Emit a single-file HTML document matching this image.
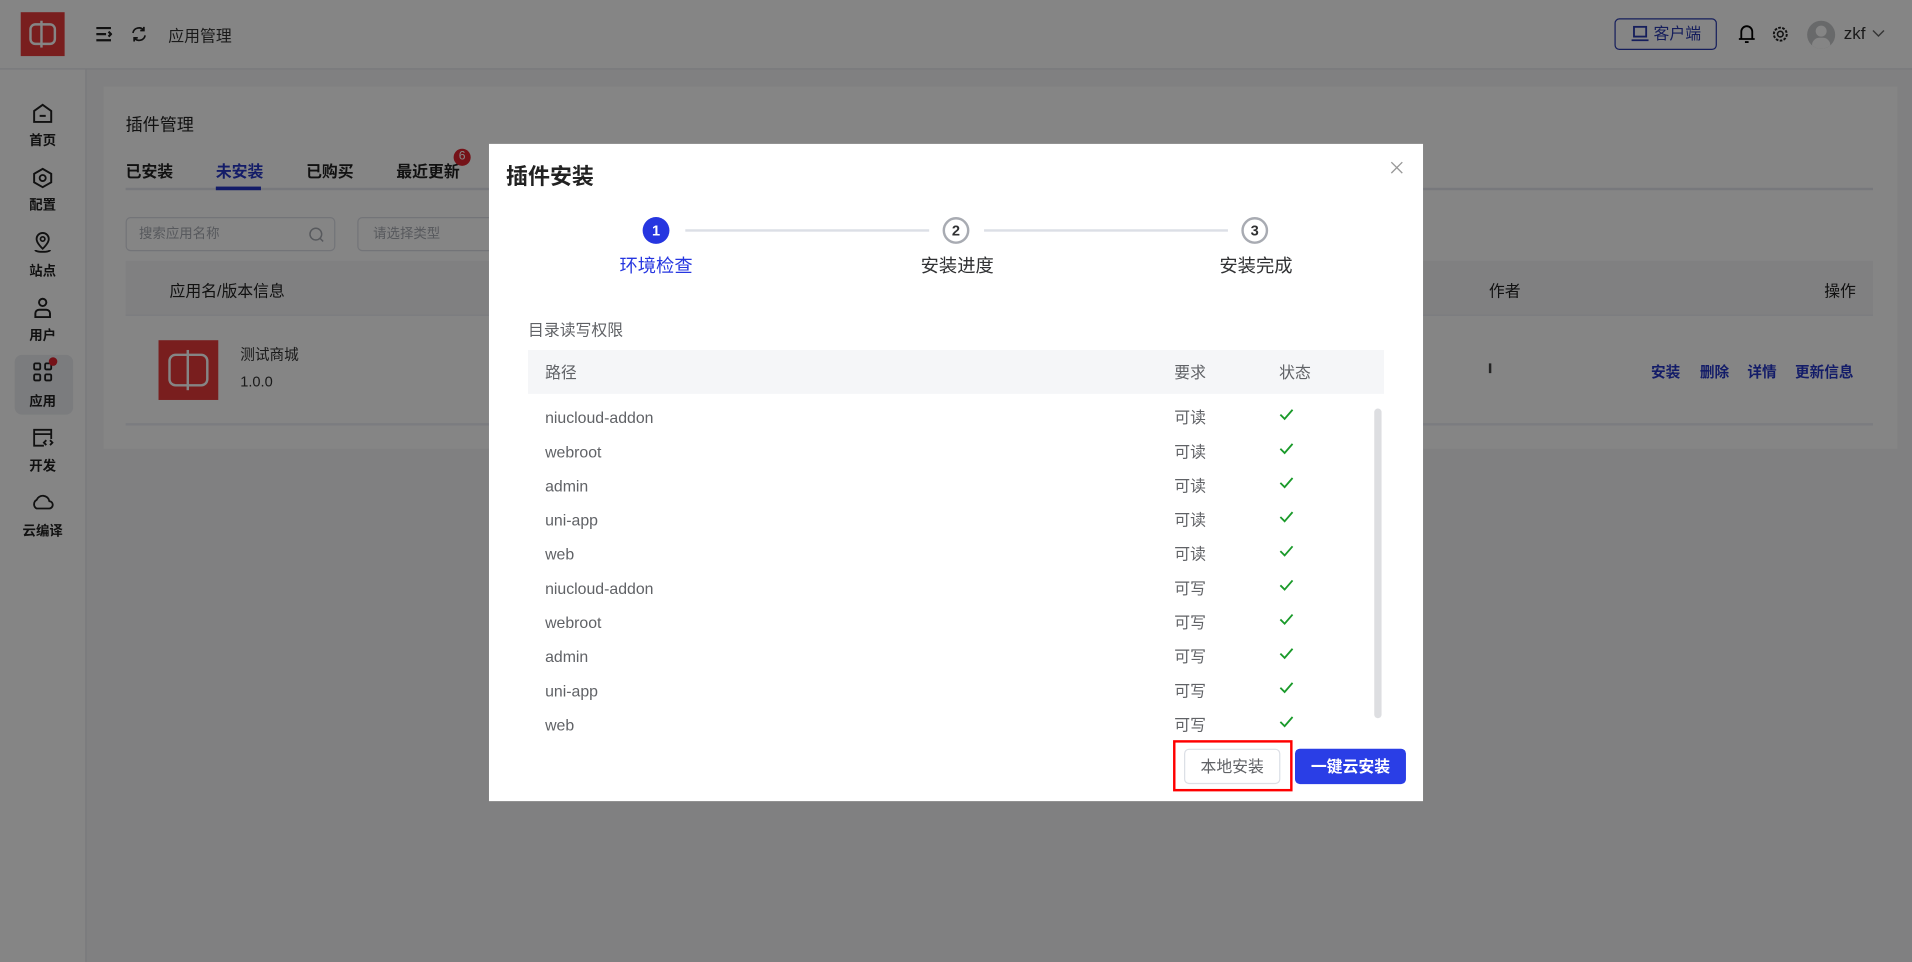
<!DOCTYPE html>
<html><head><meta charset="utf-8">
<style>
*{box-sizing:border-box;margin:0;padding:0}
html,body{width:1912px;height:962px;overflow:hidden;background:#fff}
body{font-family:"Liberation Sans","Noto Sans CJK SC",sans-serif;color:#303133}
#w{position:absolute;left:0;top:0;width:1568px;height:789px;transform:scale(1.21939);transform-origin:0 0;background:#f5f6f8}
.a{position:absolute;white-space:nowrap}
.hdr{position:absolute;left:0;top:0;width:1568px;height:57px;background:#fff;border-bottom:1px solid #e4e6eb}
.side{position:absolute;left:0;top:57px;width:71px;height:732px;background:#fff;border-right:1px solid #e4e6eb}
.si{position:absolute;left:0;width:70px;text-align:center;font-size:11px;font-weight:bold;color:#222}
.card{position:absolute;left:85px;top:71px;width:1471px;height:297px;background:#fff}
.ov{position:absolute;left:0;top:0;width:1568px;height:789px;background:rgba(0,0,0,0.48)}
.dlg{position:absolute;left:401px;top:118px;width:766px;height:539px;background:#fff}
.row{position:absolute;left:46px;font-size:13px;color:#606266;line-height:16px;white-space:nowrap}
</style></head><body><div id="w">
<div class="hdr">
 <div class="a" style="left:17px;top:10px;width:36px;height:36px;background:#e83b3b"></div>
 <div class="a" style="left:24px;top:19px;width:22px;height:18px;border:2px solid #fff;border-radius:5px"></div>
 <div class="a" style="left:33px;top:17px;width:2px;height:22px;background:#fff"></div>
 <svg class="a" style="left:78px;top:21px" width="14" height="14" viewBox="0 0 14 14"><path d="M1 2h12M1 7h8M1 12h12M11 5l2 2-2 2" stroke="#222" stroke-width="1.8" fill="none"/></svg>
 <svg class="a" style="left:107px;top:21px" width="14" height="14" viewBox="0 0 14 14"><path d="M2 6a5 5 0 0 1 9-2M12 8a5 5 0 0 1-9 2M11 1v3H8M3 13v-3h3" stroke="#222" stroke-width="1.4" fill="none"/></svg>
 <div class="a" style="left:138px;top:19px;font-size:13px;color:#333">应用管理</div>
 <div class="a" style="left:1324px;top:15px;width:84px;height:26px;border:1px solid #2a3ab0;border-radius:4px;color:#2a3ab0;font-size:13px;line-height:16px;padding:4px 0 0 31px">客户端</div>
 <svg class="a" style="left:1338px;top:21px" width="14" height="13" viewBox="0 0 14 13"><rect x="2" y="1" width="10" height="8" stroke="#2a3ab0" stroke-width="1.5" fill="none"/><path d="M0 12h14" stroke="#2a3ab0" stroke-width="1.5"/></svg>
 <svg class="a" style="left:1425px;top:19px" width="15" height="17" viewBox="0 0 15 17"><path d="M3 13V7a4.5 4.5 0 0 1 9 0v6M1 13h13M6 15.5h3" stroke="#000" stroke-width="1.5" fill="none"/></svg>
 <svg class="a" style="left:1453px;top:21px" width="14" height="14" viewBox="0 0 14 14"><circle cx="7" cy="7" r="2.3" stroke="#222" stroke-width="1.3" fill="none"/><circle cx="7" cy="7" r="5.3" stroke="#222" stroke-width="1.6" stroke-dasharray="2.2 1.1" fill="none"/></svg>
 <div class="a" style="left:1482px;top:17px;width:23px;height:23px;border-radius:50%;background:#c8c9cc;overflow:hidden"><div class="a" style="left:7px;top:4px;width:9px;height:9px;border-radius:50%;background:#fff"></div><div class="a" style="left:4px;top:14px;width:15px;height:10px;border-radius:6px 6px 0 0;background:#fff"></div></div>
 <div class="a" style="left:1512px;top:19px;font-size:14px;color:#333">zkf</div>
 <svg class="a" style="left:1535px;top:24px" width="11" height="7" viewBox="0 0 11 7"><path d="M1 1l4.5 4.5L10 1" stroke="#666" stroke-width="1.2" fill="none"/></svg>
</div>
<div class="side">
 <svg class="a" style="left:26px;top:27px" width="18" height="18" viewBox="0 0 18 18"><path d="M2 7l7-5 7 5v9H2z M6.5 11h5" stroke="#222" stroke-width="1.6" fill="none"/></svg>
 <div class="si" style="top:50px">首页</div>
 <svg class="a" style="left:26px;top:80px" width="18" height="18" viewBox="0 0 18 18"><path d="M9 1.5l7 4v7l-7 4-7-4v-7z" stroke="#222" stroke-width="1.6" fill="none"/><circle cx="9" cy="9" r="2.5" stroke="#222" stroke-width="1.5" fill="none"/></svg>
 <div class="si" style="top:103px">配置</div>
 <svg class="a" style="left:26px;top:133px" width="18" height="19" viewBox="0 0 18 19"><path d="M9 14s-5-4.5-5-8a5 5 0 0 1 10 0c0 3.5-5 8-5 8zM3 15c0 2 12 2 12 0" stroke="#222" stroke-width="1.5" fill="none"/><circle cx="9" cy="6" r="1.8" stroke="#222" stroke-width="1.4" fill="none"/></svg>
 <div class="si" style="top:157px">站点</div>
 <svg class="a" style="left:26px;top:186px" width="18" height="18" viewBox="0 0 18 18"><circle cx="9" cy="5" r="3" stroke="#222" stroke-width="1.6" fill="none"/><path d="M3 17v-3a3 3 0 0 1 3-3h6a3 3 0 0 1 3 3v3z" stroke="#222" stroke-width="1.6" fill="none"/></svg>
 <div class="si" style="top:210px">用户</div>
 <div class="a" style="left:12px;top:234px;width:48px;height:49px;background:#eceef2;border-radius:6px"></div>
 <svg class="a" style="left:27px;top:240px" width="16" height="16" viewBox="0 0 16 16"><rect x="1" y="1" width="5" height="5" rx="1" stroke="#222" stroke-width="1.5" fill="none"/><rect x="10" y="1" width="5" height="5" rx="1" stroke="#222" stroke-width="1.5" fill="none"/><rect x="1" y="10" width="5" height="5" rx="1" stroke="#222" stroke-width="1.5" fill="none"/><rect x="10" y="10" width="5" height="5" rx="1" stroke="#222" stroke-width="1.5" fill="none"/></svg>
 <div class="a" style="left:40px;top:236px;width:7px;height:7px;border-radius:50%;background:#e0242e"></div>
 <div class="si" style="top:264px">应用</div>
 <svg class="a" style="left:26px;top:294px" width="18" height="16" viewBox="0 0 18 16"><path d="M16 9V1.5H2v13h8M2 5h14M5 3h.01M7 3h.01M12 10l-2 2 2 2M15 10l2 2-2 2" stroke="#222" stroke-width="1.5" fill="none"/></svg>
 <div class="si" style="top:317px">开发</div>
 <svg class="a" style="left:25px;top:348px" width="20" height="13" viewBox="0 0 20 13"><path d="M5 12a4 4 0 0 1 0-7 5.5 5.5 0 0 1 10.5 1A3 3 0 0 1 15 12z" stroke="#222" stroke-width="1.5" fill="none"/></svg>
 <div class="si" style="top:370px">云编译</div>
</div>
<div class="card">
 <div class="a" style="left:18px;top:21px;font-size:14px;color:#222">插件管理</div>
 <div class="a" style="left:18px;top:59px;font-size:13px;font-weight:bold;color:#222">已安装</div>
 <div class="a" style="left:92px;top:59px;font-size:13px;font-weight:bold;color:#2636c8">未安装</div>
 <div class="a" style="left:166px;top:59px;font-size:13px;font-weight:bold;color:#222">已购买</div>
 <div class="a" style="left:240px;top:59px;font-size:13px;font-weight:bold;color:#222">最近更新</div>
 <div class="a" style="left:287px;top:51px;width:14px;height:14px;border-radius:7px;background:#e0242e;color:#fff;font-size:10px;text-align:center;line-height:14px">6</div>
 <div class="a" style="left:18px;top:83px;width:1433px;height:2px;background:#e4e7ed"></div>
 <div class="a" style="left:92px;top:82px;width:37px;height:3px;background:#2636c8"></div>
 <div class="a" style="left:18px;top:107px;width:172px;height:28px;border:1px solid #dcdfe6;border-radius:4px;font-size:11px;color:#a8abb2;line-height:14px;padding:6px 0 0 10px">搜索应用名称</div>
 <svg class="a" style="left:168px;top:115px" width="13" height="13" viewBox="0 0 13 13"><circle cx="6" cy="6" r="4.8" stroke="#a8abb2" stroke-width="1.2" fill="none"/><path d="M9.5 9.5l2.5 2.5" stroke="#a8abb2" stroke-width="1.2"/></svg>
 <div class="a" style="left:208px;top:107px;width:172px;height:28px;border:1px solid #dcdfe6;border-radius:4px;font-size:11px;color:#a8abb2;line-height:14px;padding:6px 0 0 12px">请选择类型</div>
 <div class="a" style="left:18px;top:143px;width:1433px;height:45px;background:#f5f6f8;border-bottom:1px solid #ebeef5"></div>
 <div class="a" style="left:54px;top:157px;font-size:13px;color:#222">应用名/版本信息</div>
 <div class="a" style="left:1136px;top:157px;font-size:13px;color:#222">作者</div>
 <div class="a" style="left:1411px;top:157px;font-size:13px;color:#222">操作</div>
 <div class="a" style="left:45px;top:208px;width:49px;height:49px;background:#e83b3b"></div>
 <div class="a" style="left:53px;top:219px;width:33px;height:27px;border:2px solid #fff;border-radius:6px"></div>
 <div class="a" style="left:68px;top:216px;width:2px;height:33px;background:#fff"></div>
 <div class="a" style="left:112px;top:211px;font-size:12px;color:#333">测试商城</div>
 <div class="a" style="left:112px;top:235px;font-size:12px;color:#333">1.0.0</div>
 <div class="a" style="left:1136px;top:227px;width:2px;height:8px;background:#444"></div>
 <div class="a" style="left:1269px;top:225px;font-size:12px;font-weight:bold;color:#2636c8">安装</div>
 <div class="a" style="left:1309px;top:225px;font-size:12px;font-weight:bold;color:#2636c8">删除</div>
 <div class="a" style="left:1348px;top:225px;font-size:12px;font-weight:bold;color:#2636c8">详情</div>
 <div class="a" style="left:1387px;top:225px;font-size:12px;font-weight:bold;color:#2636c8">更新信息</div>
 <div class="a" style="left:18px;top:276px;width:1433px;height:2px;background:#ebeef5"></div>
</div>
<div class="ov"></div>
<div class="dlg">
 <div class="a" style="left:14px;top:13px;font-size:18px;font-weight:bold;color:#222">插件安装</div>
 <svg class="a" style="left:739px;top:14px" width="11" height="11" viewBox="0 0 11 11"><path d="M1 1l9 9M10 1l-9 9" stroke="#999" stroke-width="1.1"/></svg>
 <div class="a" style="left:161px;top:70px;width:200px;height:2px;background:#dcdfe6"></div>
 <div class="a" style="left:406px;top:70px;width:200px;height:2px;background:#dcdfe6"></div>
 <div class="a" style="left:126px;top:60px;width:22px;height:22px;border-radius:50%;background:#2636e0;color:#fff;font-size:12px;font-weight:bold;text-align:center;line-height:22px">1</div>
 <div class="a" style="left:372px;top:60px;width:22px;height:22px;border-radius:50%;border:2px solid #a8abb2;color:#303133;font-size:12px;font-weight:bold;text-align:center;line-height:18px">2</div>
 <div class="a" style="left:617px;top:60px;width:22px;height:22px;border-radius:50%;border:2px solid #a8abb2;color:#303133;font-size:12px;font-weight:bold;text-align:center;line-height:18px">3</div>
 <div class="a" style="left:107px;top:89px;font-size:15px;color:#2636e0">环境检查</div>
 <div class="a" style="left:354px;top:89px;font-size:15px;color:#303133">安装进度</div>
 <div class="a" style="left:599px;top:89px;font-size:15px;color:#303133">安装完成</div>
 <div class="a" style="left:32px;top:142px;font-size:13px;color:#606266">目录读写权限</div>
 <div class="a" style="left:32px;top:169px;width:702px;height:36px;background:#f5f6f8"></div>
 <div class="row" style="top:180px">路径</div>
 <div class="row" style="top:180px;left:562px">要求</div>
 <div class="row" style="top:180px;left:648px">状态</div>
 <div class="a" style="left:726px;top:217px;width:6px;height:254px;border-radius:3px;background:#dddee1"></div>
 <div id="rows"></div>
 <div class="a" style="left:561px;top:489px;width:98px;height:42px;border:2px solid #f00"></div>
 <div class="a" style="left:570px;top:496px;width:79px;height:29px;border:1px solid #dcdfe6;border-radius:4px;font-size:13px;color:#606266;text-align:center;line-height:27px">本地安装</div>
 <div class="a" style="left:661px;top:496px;width:91px;height:29px;border-radius:4px;background:#2a3ee6;font-size:13px;font-weight:bold;color:#fff;text-align:center;line-height:29px">一键云安装</div>
</div>
</div>
<script>
var n=["niucloud-addon","webroot","admin","uni-app","web"],h="";
for(var i=0;i<10;i++){var t=217+i*28;h+='<div class="row" style="top:'+t+'px">'+n[i%5]+'</div><div class="row" style="top:'+t+'px;left:562px">'+(i<5?'可读':'可写')+'</div><svg class="a" style="left:648px;top:'+(t)+'px" width="12" height="10" viewBox="0 0 12 10"><path d="M1 5l3.5 3.5L11 1" stroke="#1a9a2a" stroke-width="1.5" fill="none"/></svg>';}
document.getElementById("rows").outerHTML=h;
</script>
</body></html>
